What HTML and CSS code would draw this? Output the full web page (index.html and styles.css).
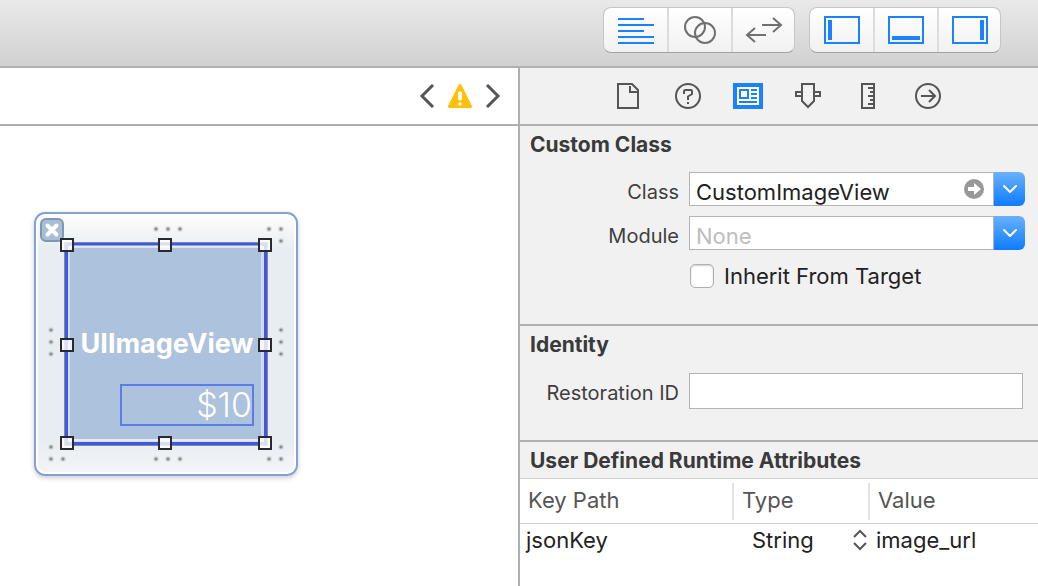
FILE: index.html
```
<!DOCTYPE html>
<html lang="en">
<head>
<meta charset="utf-8">
<meta name="viewport" content="width=device-width, initial-scale=1">
<title>Identity Inspector</title>
<link rel="stylesheet" href="styles.css">
</head>
<body>
<header class="toolbar">
  <div class="segmented">
    <button class="segment" type="button" aria-label="Standard editor">
      <svg class="icon accent" width="36" height="28" viewBox="0 0 36 28"><path d="M0 3h26M0 9h36M0 15h26M0 21h36M0 27h36"/></svg>
    </button>
    <button class="segment" type="button" aria-label="Assistant editor">
      <svg class="icon" width="36" height="30" viewBox="0 0 36 30"><circle cx="13" cy="12" r="10"/><circle cx="23" cy="18" r="10"/></svg>
    </button>
    <button class="segment" type="button" aria-label="Version editor">
      <svg class="icon" width="38" height="28" viewBox="0 0 38 28"><path d="M17 9h18M28 2l8 7-8 7M21 19H3M10 12l-8 7 8 7"/></svg>
    </button>
  </div>
  <div class="segmented">
    <button class="segment" type="button" aria-label="Navigator">
      <svg class="icon accent" width="36" height="28" viewBox="0 0 36 28"><path d="M1 1h34v26H1z"/><path d="M6 4v20" stroke-width="4"/></svg>
    </button>
    <button class="segment" type="button" aria-label="Debug area">
      <svg class="icon accent" width="36" height="28" viewBox="0 0 36 28"><path d="M1 1h34v26H1z"/><path d="M4 22h28" stroke-width="4"/></svg>
    </button>
    <button class="segment" type="button" aria-label="Utilities">
      <svg class="icon accent" width="36" height="28" viewBox="0 0 36 28"><path d="M1 1h34v26H1z"/><path d="M30 4v20" stroke-width="4"/></svg>
    </button>
  </div>
</header>
<div class="workspace">
  <main class="editor">
    <nav class="jumpbar" aria-label="Issues">
      <button class="bare" type="button" aria-label="Previous issue">
        <svg class="icon chevron" width="16" height="24" viewBox="0 0 16 24"><path d="M14 1L3 12l11 11"/></svg>
      </button>
      <button class="bare" type="button" aria-label="Warnings">
        <svg width="24" height="24" viewBox="0 0 24 24"><path d="M12 1.500L22.500 22.500H1.500z" fill="#ffc009" stroke="#ffc009" stroke-width="3" stroke-linejoin="round"/><path d="M11.500 9h1l-.2 6h-.6z" fill="#fff" stroke="#fff" stroke-width="3" stroke-linejoin="round"/><circle cx="12" cy="20" r="1.700" fill="#fff"/></svg>
      </button>
      <button class="bare" type="button" aria-label="Next issue">
        <svg class="icon chevron" width="16" height="24" viewBox="0 0 16 24"><path d="M2 1l11 11L2 23"/></svg>
      </button>
    </nav>
    <section class="canvas" aria-label="Canvas">
      <div class="scene">
        <svg class="scene-art" width="264" height="264" viewBox="0 0 264 264" aria-hidden="true">
          <defs>
            <linearGradient id="cell" x1="0" y1="0" x2="0" y2="1">
              <stop offset="0" stop-color="#fcfdfd"/><stop offset=".13" stop-color="#e8edf1"/>
              <stop offset=".88" stop-color="#e8edf1"/><stop offset="1" stop-color="#f3f5f8"/>
            </linearGradient>
            <g id="dot"><circle r="3" fill="#cfd2d4" opacity=".6"/><rect x="-1.500" y="-1.500" width="3" height="3" rx="1" fill="#8c8e90"/></g>
            <path id="knob" d="M1 1h12v12H1z" fill="#fff" fill-opacity=".8" stroke="#2a2a2e" stroke-width="2"/>
          </defs>
          <rect x="1" y="1" width="262" height="262" rx="10" fill="#fff" stroke="#86a0d4" stroke-width="2"/>
          <rect x="4" y="4" width="256" height="256" rx="8" fill="url(#cell)"/>
          <rect x="30" y="30" width="204" height="204" fill="#868a8e"/>
          <rect x="31" y="31" width="202" height="202" fill="#3a59ea"/>
          <rect x="34" y="34" width="196" height="196" fill="#d2dbf3"/>
          <rect x="36" y="36" width="191" height="191" fill="#adc2dc"/>
          <path d="M36 34.500h192M36 228h192" stroke="#e8eaf0" stroke-width="2"/>
          <g>
            <use href="#dot" x="122" y="17"/><use href="#dot" x="134" y="17"/><use href="#dot" x="146" y="17"/>
            <use href="#dot" x="235" y="17"/><use href="#dot" x="247" y="17"/><use href="#dot" x="247" y="29"/>
            <use href="#dot" x="17" y="118"/><use href="#dot" x="17" y="130"/><use href="#dot" x="17" y="142"/>
            <use href="#dot" x="247" y="118"/><use href="#dot" x="247" y="130"/><use href="#dot" x="247" y="142"/>
            <use href="#dot" x="17" y="235"/><use href="#dot" x="17" y="247"/><use href="#dot" x="29" y="247"/>
            <use href="#dot" x="122" y="247"/><use href="#dot" x="134" y="247"/><use href="#dot" x="146" y="247"/>
            <use href="#dot" x="235" y="247"/><use href="#dot" x="247" y="247"/><use href="#dot" x="247" y="235"/>
          </g>
          <rect x="7" y="7" width="22" height="22" rx="5" fill="#a9bdd4" stroke="#8097b1" stroke-width="2"/>
          <path d="M13.500 13.500l9 9M22.500 13.500l-9 9" stroke="#fff" stroke-width="4" stroke-linecap="round"/>
          <g>
            <use href="#knob" x="26" y="26"/><use href="#knob" x="124" y="26"/><use href="#knob" x="224" y="26"/>
            <use href="#knob" x="26" y="126"/><use href="#knob" x="224" y="126"/>
            <use href="#knob" x="26" y="224"/><use href="#knob" x="124" y="224"/><use href="#knob" x="224" y="224"/>
          </g>
        </svg>
        <span class="view-name">UIImageView</span>
        <span class="price">$10</span>
      </div>
    </section>
  </main>
  <aside class="inspector">
    <nav class="tabs" aria-label="Inspectors">
      <button class="bare tab" type="button" aria-label="File inspector">
        <svg class="icon dark" width="24" height="28" viewBox="0 0 24 28"><path d="M2 2h14l6 6v18H2zM14 4v6h7"/></svg>
      </button>
      <button class="bare tab" type="button" aria-label="Quick help">
        <svg class="icon dark" width="28" height="28" viewBox="0 0 28 28"><circle cx="14" cy="14" r="12"/><path d="M10 12V9.500Q10 8 11.500 8h5.500Q18 8 18 10v2l-4 2.500V18M14 20v2"/></svg>
      </button>
      <button class="bare tab" type="button" aria-label="Identity inspector" aria-pressed="true">
        <svg width="30" height="26" viewBox="0 0 30 26"><path d="M0 0h30v26H0z" fill="#1a82ff"/><path d="M4 4h22v18H4z" fill="#fff"/><path d="M7 7h8v8H7zM18 7h6M18 11h6M18 15h6M6 19h18" fill="none" stroke="#1a82ff" stroke-width="2"/></svg>
      </button>
      <button class="bare tab" type="button" aria-label="Attributes inspector">
        <svg class="icon dark" width="28" height="28" viewBox="0 0 28 28"><path d="M8 2h12v17l-6 6-6-6zM8 10H2v4h6M20 10h6v4h-6"/></svg>
      </button>
      <button class="bare tab" type="button" aria-label="Size inspector">
        <svg class="icon dark" width="16" height="28" viewBox="0 0 16 28"><path d="M2 2h12v24H2zM8 6h6M10 10h4M8 14h6M10 18h4M8 22h6"/></svg>
      </button>
      <button class="bare tab" type="button" aria-label="Connections inspector">
        <svg class="icon dark" width="28" height="28" viewBox="0 0 28 28"><circle cx="14" cy="14" r="12"/><path d="M7 14h13M15 8l6 6-6 6"/></svg>
      </button>
    </nav>
    <section class="panel panel-class">
      <h2 class="title">Custom Class</h2>
      <div class="form">
        <label class="label" for="class">Class</label>
        <div class="combo">
          <input class="field" id="class" type="text" value="CustomImageView">
          <button class="bare jump" type="button" aria-label="Go to class">
            <svg width="20" height="20" viewBox="0 0 20 20"><circle cx="10" cy="10" r="10" fill="#989898"/><path d="M4 8h6V4l7 6-7 6v-4H4z" fill="#fff"/></svg>
          </button>
          <button class="drop" type="button" aria-label="Show classes">
            <svg width="16" height="10" viewBox="0 0 16 10"><path d="M2 2l6 6 6-6"/></svg>
          </button>
        </div>
        <label class="label" for="module">Module</label>
        <div class="combo">
          <input class="field" id="module" type="text" placeholder="None">
          <button class="drop" type="button" aria-label="Show modules">
            <svg width="16" height="10" viewBox="0 0 16 10"><path d="M2 2l6 6 6-6"/></svg>
          </button>
        </div>
        <label class="check"><input class="box" type="checkbox">Inherit From Target</label>
      </div>
    </section>
    <section class="panel panel-identity">
      <h2 class="title">Identity</h2>
      <div class="form">
        <label class="label" for="restoration">Restoration ID</label>
        <input class="field plain" id="restoration" type="text">
      </div>
    </section>
    <section class="attributes">
      <h2 class="title">User Defined Runtime Attributes</h2>
      <table class="grid">
        <colgroup><col class="col-key"><col class="col-type"><col></colgroup>
        <thead>
          <tr><th scope="col"><span class="head">Key Path</span></th><th scope="col"><span class="head">Type</span></th><th scope="col"><span class="head">Value</span></th></tr>
        </thead>
        <tbody>
          <tr>
            <td>jsonKey</td>
            <td>
              <div class="picker">
                <select class="select" aria-label="Type"><option>String</option></select>
                <svg class="icon dark" width="14" height="22" viewBox="0 0 14 22"><path d="M1 8l6-6 6 6M1 14l6 6 6-6"/></svg>
              </div>
            </td>
            <td>image_url</td>
          </tr>
        </tbody>
      </table>
    </section>
  </aside>
</div>
</body>
</html>
```
FILE: styles.css
```
* { box-sizing: border-box; }

body {
  margin: 0;
  min-height: 100vh;
  display: flex;
  flex-direction: column;
  background: #fff;
  color: #222;
  font-family: Inter, "Liberation Sans", sans-serif;
  font-size: 22px;
  line-height: 28px;
}

button, input, select { font: inherit; color: inherit; margin: 0; }
svg { display: block; flex: none; }

.icon { fill: none; stroke: #707070; stroke-width: 2; }
.icon.accent { stroke: #1a82ff; }
.icon.dark { stroke: #555; }
.icon.chevron { stroke: #555; stroke-width: 3; }

.bare { padding: 0; border: 0; background: none; }

.toolbar {
  display: flex;
  justify-content: flex-end;
  gap: 14px;
  padding: 7px 37px 13px;
  border-bottom: 2px solid #afafaf;
  background: linear-gradient(#e9e9e9, #d1d1d1);
}

.segmented {
  display: flex;
  border: 1px solid #c6c6c6;
  border-bottom-color: #a3a3a3;
  border-radius: 8px;
  background: linear-gradient(#fff, #f1f1f1);
}

.segment {
  display: flex;
  align-items: center;
  justify-content: center;
  width: 64px;
  height: 44px;
  padding: 0;
  border: 0;
  border-left: 2px solid #dcdcdc;
  background: none;
}

.segment:first-child { width: 63px; border-left: 0; }
.segment:last-child { width: 63px; }

.workspace { flex: 1; display: flex; }
.editor { flex: 1; min-width: 0; display: flex; flex-direction: column; }

.jumpbar {
  display: flex;
  align-items: center;
  justify-content: flex-end;
  gap: 13px;
  height: 58px;
  padding-right: 17px;
  border-bottom: 2px solid #afafaf;
}

.canvas { flex: 1; padding: 86px 34px; }

.scene {
  position: relative;
  width: 264px;
  height: 264px;
  border-radius: 11px;
  box-shadow: 0 2px 5px rgba(0, 0, 0, .2);
}

.view-name, .price { position: absolute; color: #fff; }

.view-name {
  left: 36px;
  right: 34px;
  top: 116px;
  text-align: center;
  font-size: 27px;
  line-height: 32px;
  font-weight: 700;
}

.price {
  left: 86px;
  top: 172px;
  width: 134px;
  border: 2px solid #5b7dea;
  text-align: right;
  font-size: 34px;
  line-height: 38px;
  font-weight: 300;
}

.inspector {
  flex: none;
  width: 520px;
  border-left: 2px solid #afafaf;
  background: #f1f1f1;
  display: flex;
  flex-direction: column;
}

.tabs {
  display: flex;
  align-items: center;
  justify-content: center;
  gap: 24px;
  height: 58px;
  padding-right: 2px;
  border-bottom: 2px solid #afafaf;
}

.tab { display: flex; justify-content: center; width: 36px; }

.title {
  margin: 0;
  padding: 5px 10px;
  font-size: 21px;
  line-height: 28px;
  font-weight: 700;
  color: #3a3a3a;
}

.panel { border-bottom: 2px solid #afafaf; }
.panel-class { height: 200px; }
.panel-identity { height: 116px; }

.form {
  display: grid;
  grid-template-columns: 159px minmax(0, 1fr);
  gap: 10px;
  align-items: center;
  padding: 8px 13px 0 0;
}

.panel-identity .form { padding-top: 9px; }

.label { text-align: right; padding-top: 6px; color: #3f3f3f; font-size: 20px; }
.panel-identity .label { padding-top: 4px; }

.combo { display: flex; position: relative; }

.field {
  flex: 1;
  min-width: 0;
  height: 34px;
  padding: 6px 6px 0;
  border: 1px solid #b4b4b4;
  border-radius: 0;
  background: #fff;
}

.field::placeholder { color: #bdbdbd; opacity: 1; }
.field.plain { height: 36px; margin-right: 2px; }

.jump { position: absolute; right: 41px; top: 7px; }

.drop {
  display: flex;
  align-items: center;
  justify-content: center;
  width: 31px;
  padding: 0;
  border: 0;
  border-radius: 0 6px 6px 0;
  background: linear-gradient(#69b1fb, #0d7cff);
}

.drop path { fill: none; stroke: #fff; stroke-width: 2; stroke-linecap: round; stroke-linejoin: round; }

.check { grid-column: 2; display: flex; align-items: center; gap: 10px; padding: 2px 0 0 1px; }

.box {
  appearance: none;
  width: 24px;
  height: 24px;
  border: 1px solid #b0b0b0;
  border-radius: 5px;
  background: #fff;
  box-shadow: inset 0 1px 2px rgba(0, 0, 0, .2);
}

.attributes { flex: 1; display: flex; flex-direction: column; background: #fff; }
.attributes .title { padding-bottom: 3px; background: #f1f1f1; border-bottom: 1px solid #d0d0d0; }

.grid { width: 100%; border-collapse: collapse; table-layout: fixed; }
.col-key { width: 212px; }
.col-type { width: 136px; }
.grid th { padding: 4px 0 3px; border-bottom: 1px solid #d0d0d0; font-weight: 400; text-align: left; color: #555; }
.head { display: block; height: 37px; padding: 3px 8px; border-left: 2px solid #e2e2e2; }
.grid th:first-child .head { border-left-color: transparent; padding-left: 6px; }
.grid td { padding: 2px 6px; }
.grid td:nth-child(2) { padding: 2px 1px 2px 20px; }
.grid td:nth-child(3) { padding-left: 8px; }

.picker { display: flex; justify-content: space-between; align-items: center; }
.select { appearance: none; padding: 0; border: 0; background: none; flex: 1; }
```
